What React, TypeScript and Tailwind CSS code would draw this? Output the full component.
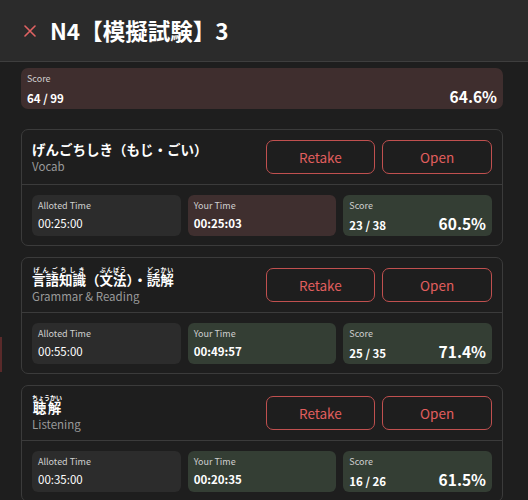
import React from 'react'

type Stat = { allotted: string; yours: string; over: boolean; score: string; pct: string }

type Section = {
    title: React.ReactNode
    sub: string
    stat: Stat
}

const rt = 'text-[6px] font-bold text-white leading-[7px]'

const sections: Section[] = [
    {
        title: <span>げんごちしき（もじ・ごい）</span>,
        sub: 'Vocab',
        stat: { allotted: '00:25:00', yours: '00:25:03', over: true, score: '23 / 38', pct: '60.5%' },
    },
    {
        title: (
            <span>
                <ruby>言語知識<rt className={rt}>げんごちしき</rt></ruby>（
                <ruby>文法<rt className={rt}>ぶんぽう</rt></ruby>）・
                <ruby>読解<rt className={rt}>どっかい</rt></ruby>
            </span>
        ),
        sub: 'Grammar & Reading',
        stat: { allotted: '00:55:00', yours: '00:49:57', over: false, score: '25 / 35', pct: '71.4%' },
    },
    {
        title: (
            <span>
                <ruby>聴解<rt className={rt}>ちょうかい</rt></ruby>
            </span>
        ),
        sub: 'Listening',
        stat: { allotted: '00:35:00', yours: '00:20:35', over: false, score: '16 / 26', pct: '61.5%' },
    },
]

function SectionCard({ s }: { s: Section }) {
    return (
        <div className="border border-[#3b3b3b] rounded-[7px]">
            {/*Title + actions*/}
            <div className="h-[55px] grid grid-cols-4 gap-[7px] items-center px-[10px] border-b border-[#3b3b3b]">
                <div className="col-span-2 flex flex-col">
                    <div className="text-[13.5px] font-bold text-white leading-[17px]">{s.title}</div>
                    <div className="text-[11.5px] text-[#9a9a9a] leading-[15px] mt-[1px]">{s.sub}</div>
                </div>
                <button className="h-[34px] rounded-[7px] border border-[#c0504f] text-[#e15e5e] text-[13.5px]">Retake</button>
                <button className="h-[34px] rounded-[7px] border border-[#c0504f] text-[#e15e5e] text-[13.5px]">Open</button>
            </div>

            {/*Stats*/}
            <div className="grid grid-cols-3 gap-[7px] px-[10px] pt-[10px] pb-[9px]">
                <div className="h-[41px] rounded-[6px] bg-[#2c2c2c] px-[6px] pt-[5px]">
                    <div className="text-[9px] leading-[12px] text-[#cfcfcf]">Alloted Time</div>
                    <div className="text-[11.5px] leading-[18px] text-white mt-[2px]">{s.stat.allotted}</div>
                </div>
                <div className={`h-[41px] rounded-[6px] px-[6px] pt-[5px] ${s.stat.over ? 'bg-[#3f2f2f]' : 'bg-[#343e34]'}`}>
                    <div className="text-[9px] leading-[12px] text-[#cfcfcf]">Your Time</div>
                    <div className="text-[11.5px] leading-[18px] font-bold text-white mt-[2px]">{s.stat.yours}</div>
                </div>
                <div className="h-[41px] rounded-[6px] bg-[#343e34] px-[6px] pt-[5px]">
                    <div className="text-[9px] leading-[12px] text-[#cfcfcf]">Score</div>
                    <div className="flex items-baseline justify-between mt-[2px]">
                        <span className="text-[11.5px] leading-[18px] font-bold text-white">{s.stat.score}</span>
                        <span className="text-[15.5px] leading-[18px] font-bold text-white">{s.stat.pct}</span>
                    </div>
                </div>
            </div>
        </div>
    )
}

export default function App() {
    return (
        <div
            className="relative w-[528px] h-[500px] overflow-hidden bg-[#1e1e1e]"
            style={{ fontFamily: '"Noto Sans CJK JP", "Noto Sans", sans-serif' }}
        >
            {/*left edge sliver*/}
            <div className="absolute left-0 top-[337px] w-[2px] h-[35px] bg-[#5a2a2a]" />

            {/*Header*/}
            <div className="h-[62px] bg-[#2b2b2b] border-b border-[#3e3e3e] flex items-center pl-[24px]">
                <svg width="12" height="12" viewBox="0 0 12 12" className="mr-[14px]">
                    <path d="M1 1 L11 11 M11 1 L1 11" stroke="#e06262" strokeWidth="1.6" strokeLinecap="round" />
                </svg>
                <h1 className="text-[22.5px] font-bold text-white leading-none">N4【模擬試験】3</h1>
            </div>

            <div className="ml-[21px] w-[482px] pt-[6px] flex flex-col">
                {/*Total score*/}
                <div className="h-[41px] rounded-[7px] bg-[#3f2e2e] px-[6px] pt-[5px]">
                    <div className="text-[9px] leading-[12px] text-[#cfcfcf]">Score</div>
                    <div className="flex items-baseline justify-between mt-[2px]">
                        <span className="text-[11.5px] leading-[18px] font-bold text-white">64 / 99</span>
                        <span className="text-[15.5px] leading-[18px] font-bold text-white">64.6%</span>
                    </div>
                </div>

                <div className="flex flex-col gap-[11px] mt-[20px]">
                    {sections.map((s, i) => (
                        <SectionCard key={i} s={s} />
                    ))}
                </div>
            </div>
        </div>
    )
}
